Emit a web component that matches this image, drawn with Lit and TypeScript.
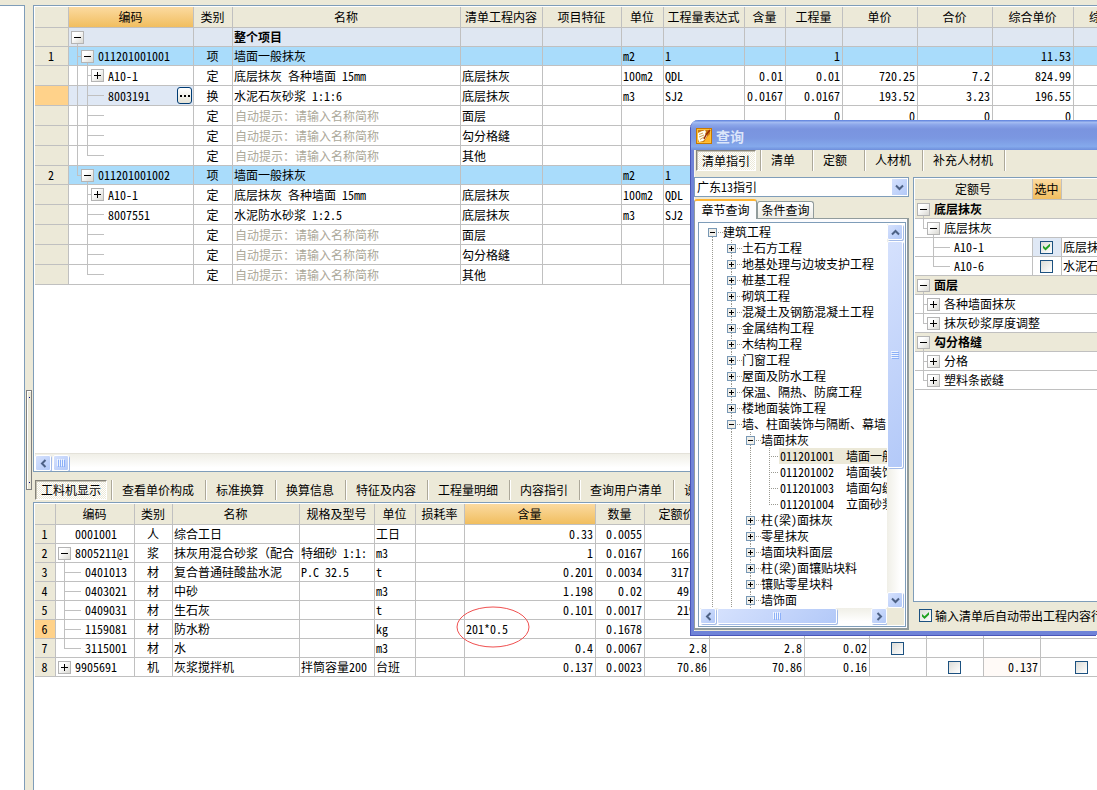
import { LitElement, html, css, svg, nothing } from "lit";
import { customElement } from "lit/decorators.js";
import { classMap } from "lit/directives/class-map.js";
import { styleMap } from "lit/directives/style-map.js";

const LINE = "#c0c0c0";

const base = css`
  :host {
    font-family: "Noto Sans Mono CJK SC", "Liberation Mono", "Noto Sans CJK SC", monospace;
    font-size: 12px;
    line-height: 16px;
    color: #000;
  }
  * {
    box-sizing: border-box;
  }
  button,
  input,
  select {
    font: inherit;
    color: inherit;
    margin: 0;
    padding: 0;
    border-radius: 0;
  }
  table {
    table-layout: fixed;
    width: 100%;
    border-collapse: separate;
    border-spacing: 0;
  }
  th,
  td {
    padding: 0 2px 0 1px;
    border-right: 1px solid #c0c0c0;
    border-bottom: 1px solid #c0c0c0;
    height: 19px;
    text-align: left;
    vertical-align: middle;
    white-space: nowrap;
    overflow: hidden;
    font-weight: normal;
  }
  tr.tall td,
  tr.tall th {
    height: 20px;
  }
  th {
    background: #ece9d8;
    text-align: center;
  }
  thead th {
    height: 21px;
  }
  thead th.hot {
    background: linear-gradient(#fbdaa0, #f1be5f);
  }
  th.mark {
    background: #ffd28a;
  }
  .center {
    text-align: center;
  }
  .right {
    text-align: right;
  }
  td.tree {
    position: relative;
    padding: 0;
  }
  .twig {
    position: relative;
    display: flex;
    align-items: center;
  }
  .guides {
    position: absolute;
    left: 0;
    top: 0;
    width: 100%;
    height: 100%;
  }
  .toggle {
    flex: none;
    width: 13px;
    height: 13px;
    margin-right: 4px;
    border: 1px solid #b4b4b4;
    background: linear-gradient(135deg, #fff 30%, #d9d8d2);
    display: block;
    line-height: 0;
  }
  .toggle svg {
    display: block;
  }
  input.tick {
    appearance: none;
    display: block;
    flex: none;
    width: 13px;
    height: 13px;
    border: 1px solid #1c5180;
    background: linear-gradient(135deg, #dcdcd7, #fff);
  }
  td input.tick {
    margin: 0 auto;
  }
  input.tick:checked::before {
    content: "";
    display: block;
    width: 7px;
    height: 7px;
    margin: 2px;
    background: #21a121;
    clip-path: polygon(0 29%, 36% 60%, 100% 0, 100% 38%, 36% 100%, 0 66%);
  }
  .tabs {
    display: flex;
  }
  .tabs button {
    appearance: none;
    border: 0;
    border-left: 1px solid #aca899;
    box-shadow: inset 1px 0 #fff;
    background: none;
    text-align: left;
    white-space: nowrap;
    flex: none;
  }
  .tabs button.down {
    border: 1px solid;
    border-color: #85837a #fff #fff #85837a;
    box-shadow: inset 1px 1px #c5c2b4;
    background: repeating-conic-gradient(#fff 0 25%, #ece9d8 0 50%) 0 0 / 2px 2px;
  }
  .sb {
    display: flex;
    background: linear-gradient(#f0efe7, #fff 80%);
  }
  .sb.v {
    flex-direction: column;
    background: linear-gradient(90deg, #f0efe7, #fff 80%);
  }
  .sb button,
  .sb .thumb {
    flex: none;
    width: 16px;
    height: 16px;
    border: 1px solid #fff;
    border-radius: 2px;
    box-shadow: 1px 1px #a4bbe8;
    background: linear-gradient(135deg, #d5e1fd, #b3c9f8);
    display: grid;
    place-items: center;
  }
`;

type TreeRow = { depth: number; state?: "open" | "shut"; last?: boolean; through?: number[]; leaf?: boolean };

/* Connector lines and expander for one cell of a tree column. */
const twig = (r: TreeRow, label: unknown) => {
  const px = 8 + 10 * (r.depth - 1);
  const hasParent = r.depth > 0;
  return html`
    <svg class="guides" aria-hidden="true" shape-rendering="crispEdges">
      ${(r.through ?? []).map((k) => svg`<rect x=${8 + 10 * k} y="0" width="1" height="20" fill=${LINE}></rect>`)}
      ${hasParent
        ? svg`<rect x=${px} y="0" width="1" height=${r.last ? 10 : 20} fill=${LINE}></rect>
              <rect x=${px} y="9" width=${r.state ? 5 : 17} height="1" fill=${LINE}></rect>`
        : nothing}
      ${r.state === "open" ? svg`<rect x=${8 + 10 * r.depth} y="10" width="1" height="12" fill=${LINE}></rect>` : nothing}
    </svg>
    <span class="twig" style=${styleMap({ "padding-left": `${(r.state ? 2 : 19) + 10 * r.depth}px` })}>
      ${r.state
        ? html`<button class="toggle" aria-label=${r.state === "open" ? "折叠" : "展开"}>
            <svg width="11" height="11" aria-hidden="true" shape-rendering="crispEdges">
              <rect x="2" y="5" width="7" height="1"></rect>
              ${r.state === "shut" ? svg`<rect x="5" y="2" width="1" height="7"></rect>` : nothing}
            </svg>
          </button>`
        : nothing}
      ${label}
    </span>
  `;
};

const chevron = (d: string) =>
  html`<svg width="9" height="9" viewBox="0 0 9 9" aria-hidden="true">
    <path d=${d} fill="none" stroke="#4d6185" stroke-width="2"></path>
  </svg>`;
const UP = "M1 6.5L4.5 3L8 6.5";
const DOWN = "M1 2.5L4.5 6L8 2.5";
const LEFT = "M6.5 1L3 4.5L6.5 8";
const RIGHT = "M2.5 1L6 4.5L2.5 8";

const grip = (vertical: boolean) =>
  html`<svg width="8" height="8" aria-hidden="true" shape-rendering="crispEdges">
    ${[0, 2, 4, 6].map((n) =>
      vertical
        ? svg`<rect x="0" y=${n} width="7" height="1" fill="#eef4fe"></rect><rect x="1" y=${n + 1} width="7" height="1" fill="#8cb0f8"></rect>`
        : svg`<rect x=${n} y="0" width="1" height="7" fill="#eef4fe"></rect><rect x=${n + 1} y="1" width="1" height="7" fill="#8cb0f8"></rect>`
    )}
  </svg>`;

const HINT = "自动提示：请输入名称简称";

type BillRow = TreeRow & {
  no?: string;
  code?: string;
  kind?: string;
  name?: string;
  content?: string;
  unit?: string;
  expr?: string;
  nums?: string[];
  tone?: "root" | "item";
  current?: boolean;
};

const blanks = (zeros: boolean): BillRow[] =>
  ["面层", "勾分格缝", "其他"].map((content, i) => ({
    depth: 2, kind: "定", name: HINT, content, last: i === 2, nums: zeros && i === 0 ? ["", "0", "0", "0", "0"] : [],
  }));

const group = (no: string, code: string, second: BillRow, lastItem: boolean): BillRow[] => [
  { depth: 1, state: "open", last: lastItem, no, code, kind: "项", name: "墙面一般抹灰", unit: "m2", expr: "1", nums: lastItem ? [] : ["", "1", "", "", "11.53"], tone: "item" },
  ...[
    { depth: 2, state: "shut", code: "A10-1", kind: "定", name: "底层抹灰 各种墙面 15mm", content: "底层抹灰", unit: "100m2", expr: "QDL", nums: lastItem ? [] : ["0.01", "0.01", "720.25", "7.2", "824.99"] } as BillRow,
    second,
    ...blanks(!lastItem),
  ].map((r) => ({ ...r, through: lastItem ? [] : [0] })),
];

const BILL: BillRow[] = [
  { depth: 0, state: "open", name: "整个项目", tone: "root" },
  ...group("1", "011201001001", {
    depth: 2, code: "8003191", kind: "换", name: "水泥石灰砂浆 1:1:6", content: "底层抹灰", unit: "m3", expr: "SJ2",
    nums: ["0.0167", "0.0167", "193.52", "3.23", "196.55"], current: true,
  }, false),
  ...group("2", "011201001002", {
    depth: 2, code: "8007551", kind: "定", name: "水泥防水砂浆 1:2.5", content: "底层抹灰", unit: "m3", expr: "SJ2", nums: [],
  }, true),
];

const BILL_COLS: [string, number][] = [
  ["", 34], ["编码", 125], ["类别", 39], ["名称", 228], ["清单工程内容", 82], ["项目特征", 79], ["单位", 42],
  ["工程量表达式", 81], ["含量", 41], ["工程量", 57], ["单价", 75], ["合价", 75], ["综合单价", 81], ["综合合价", 80],
];

type PartRow = TreeRow & { code: string; kind: string; name: string; spec?: string; unit: string; qty: string; total: string; rest: string[]; boxes?: number[]; extra?: string; current?: boolean };

const PARTS: PartRow[] = [
  { depth: 0, code: "0001001", kind: "人", name: "综合工日", unit: "工日", qty: "0.33", total: "0.0055", rest: ["", "", ""] },
  { depth: 0, state: "open", code: "8005211@1", kind: "浆", name: "抹灰用混合砂浆（配合", spec: "特细砂 1:1:", unit: "m3", qty: "1", total: "0.0167", rest: ["166.00", "", ""] },
  { depth: 1, code: "0401013", kind: "材", name: "复合普通硅酸盐水泥", spec: "P.C 32.5", unit: "t", qty: "0.201", total: "0.0034", rest: ["317.00", "", ""] },
  { depth: 1, code: "0403021", kind: "材", name: "中砂", unit: "m3", qty: "1.198", total: "0.02", rest: ["49.00", "", ""] },
  { depth: 1, code: "0409031", kind: "材", name: "生石灰", unit: "t", qty: "0.101", total: "0.0017", rest: ["219.5", "", ""] },
  { depth: 1, code: "1159081", kind: "材", name: "防水粉", unit: "kg", qty: "201*0.5", total: "0.1678", rest: ["", "", ""], current: true },
  { depth: 1, last: true, code: "3115001", kind: "材", name: "水", unit: "m3", qty: "0.4", total: "0.0067", rest: ["2.8", "2.8", "0.02"], boxes: [0] },
  { depth: 0, state: "shut", code: "9905691", kind: "机", name: "灰浆搅拌机", spec: "拌筒容量200", unit: "台班", qty: "0.137", total: "0.0023", rest: ["70.86", "70.86", "0.16"], boxes: [1, 3], extra: "0.137" },
];

const PART_COLS: [string, number][] = [
  ["", 21], ["编码", 79], ["类别", 38], ["名称", 127], ["规格及型号", 75], ["单位", 41], ["损耗率", 49], ["含量", 131],
  ["数量", 49], ["定额价", 65], ["", 95], ["", 65], ["", 57], ["", 57], ["", 57], ["", 82],
];

const head = (cols: [string, number][], hot: string) => html`
  <colgroup>
    ${cols.map(([, w]) => html`<col style=${styleMap({ width: `${w}px` })} />`)}
  </colgroup>
  <thead>
    <tr>
      ${cols.map(([t]) => html`<th scope="col" class=${classMap({ hot: t === hot })}>${t}</th>`)}
    </tr>
  </thead>
`;

@customElement("query-dialog")
export class QueryDialog extends LitElement {
  static styles = [
    base,
    css`
      :host {
        display: flex;
        flex-direction: column;
        border: solid #6f83d8;
        border-width: 0 0 4px 3px;
        border-radius: 7px 0 0 0;
        background: #ece9d8;
        box-shadow: inset 1px 0 #f6f4ec, -1px 1px #4a55b8;
      }
      .title {
        height: 30px;
        margin-left: -3px;
        padding: 1px 0 0 5px;
        border-radius: 7px 0 0 0;
        display: flex;
        align-items: center;
        gap: 4px;
        background: linear-gradient(#5a7fdc 0, #a3bbf1 8%, #8ba6ea 16%, #7a94df 30%, #7b97e1 60%, #84a9ec 88%, #6f8fdc 100%);
        color: #dbe5fa;
        font-size: 14px;
        font-weight: bold;
      }
      .tabs {
        height: 21px;
        padding-left: 2px;
        overflow: hidden;
      }
      .tabs button {
        padding: 0 11px 2px 10px;
        min-width: 52px;
      }
      .tabs button.down {
        padding: 0 5px;
        min-width: 60px;
        margin-right: 4px;
      }
      .body {
        flex: 1;
        min-height: 0;
        display: flex;
        gap: 4px;
        padding: 6px 0 1px;
        overflow: hidden;
      }
      .left {
        width: 215px;
        flex: none;
        display: flex;
        flex-direction: column;
      }
      .combo {
        position: relative;
        height: 20px;
      }
      .combo select {
        appearance: none;
        width: 100%;
        height: 20px;
        border: 1px solid #7f9db9;
        background: #fff;
        padding-left: 2px;
        line-height: 16px;
      }
      .combo .drop {
        position: absolute;
        right: 2px;
        top: 2px;
        width: 15px;
        height: 16px;
        background: linear-gradient(135deg, #d5e1fd, #b3c9f8);
        display: grid;
        place-items: center;
        pointer-events: none;
      }
      .pages {
        display: flex;
        align-items: flex-end;
        padding-top: 2px;
      }
      .pages button {
        border: 1px solid #919b9c;
        border-bottom: 0;
        border-radius: 3px 3px 0 0;
        background: linear-gradient(#fff, #ecebe5);
        height: 17px;
        width: 57px;
        line-height: 16px;
        white-space: nowrap;
      }
      .pages button.on {
        position: relative;
        width: 63px;
        height: 20px;
        margin-bottom: -1px;
        border-top: 2px solid #ffb533;
        background: #fcfcfe;
      }
      .pane {
        flex: 1;
        min-height: 0;
        border: 1px solid #919b9c;
        border-width: 1px 2px 2px 1px;
        background: #fcfcfe;
        padding: 3px 1px 1px 3px;
        display: flex;
      }
      .box {
        flex: 1;
        min-width: 0;
        border: 1px solid #7f9db9;
        background: #fff;
        padding: 1px;
        display: grid;
        grid-template: minmax(0, 1fr) 17px / minmax(0, 1fr) 17px;
      }
      ul {
        list-style: none;
        margin: 0;
        padding: 0 0 0 8px;
        overflow: hidden;
      }
      li {
        display: flex;
        height: 16px;
        align-items: center;
        white-space: nowrap;
      }
      li svg {
        flex: none;
      }
      .exp {
        flex: none;
        border: 0;
        background: none;
        display: block;
        height: 16px;
      }
      .exp svg {
        display: block;
      }
      li .sel {
        background: #ece9d8;
        flex: 1;
      }
      .item {
        padding-left: 1px;
      }
      .sb.v .thumb {
        flex: 0 1 227px;
        height: auto;
        margin-top: 1px;
      }
      .sb.v button:last-child {
        margin-top: auto;
      }
      .sb.h .thumb {
        width: 120px;
        margin-left: 1px;
      }
      .sb.h button:last-child {
        margin-left: auto;
      }
      .corner {
        background: #ece9d8;
      }
      .main {
        flex: 1;
        min-width: 0;
        display: flex;
        flex-direction: column;
      }
      .list {
        flex: 1;
        min-height: 0;
        overflow: hidden;
        border: 1px solid #7f9db9;
        border-right: 0;
        padding: 1px 0 0 1px;
        background: #fff;
      }
      .group td {
        background: #ece9d8;
        font-weight: bold;
      }
      .picked {
        background: #dfe8f5;
      }
      .opt {
        height: 28px;
        padding: 0 0 1px 6px;
        display: flex;
        align-items: center;
        gap: 3px;
        white-space: nowrap;
      }
    `,
  ];

  private nodes: [number, string, string][] = [
    [0, "-", "建筑工程"],
    ...["土石方工程", "地基处理与边坡支护工程", "桩基工程", "砌筑工程", "混凝土及钢筋混凝土工程", "金属结构工程", "木结构工程", "门窗工程", "屋面及防水工程", "保温、隔热、防腐工程", "楼地面装饰工程"].map(
      (t) => [1, "+", t] as [number, string, string]
    ),
    [1, "-", "墙、柱面装饰与隔断、幕墙"],
    [2, "-", "墙面抹灰"],
    [3, "s", "011201001\u00a0\u00a0墙面一般"],
    [3, "", "011201002\u00a0\u00a0墙面装饰"],
    [3, "", "011201003\u00a0\u00a0墙面勾缝"],
    [3, "", "011201004\u00a0\u00a0立面砂浆"],
    ...["柱(梁)面抹灰", "零星抹灰", "墙面块料面层", "柱(梁)面镶贴块料", "镶贴零星块料", "墙饰面"].map((t) => [2, "+", t] as [number, string, string]),
  ];

  private node([depth, mark, text]: [number, string, string], i: number) {
    const dots = (x: number, y1: number, y2: number) =>
      svg`<path d=${`M${x + 0.5} ${y1}V${y2}`} stroke="#9a9a92" stroke-dasharray="1 1"></path>`;
    const above = Array.from({ length: depth }, (_, k) => k);
    const lastLeaf = depth === 3 && this.nodes[i + 1][0] !== 3;
    const toggle = mark === "-" || mark === "+";
    const x = depth * 19;
    return html`<li>
      <svg width=${toggle ? x : x + 14} height="16" aria-hidden="true" shape-rendering="crispEdges">
        ${(toggle ? above : [0, 1, 2]).map((k) => dots(k * 19 + 4, 0, 16))}
        ${toggle
          ? nothing
          : svg`${dots(61, 0, lastLeaf ? 8 : 16)}<path d="M61 8.5H70" stroke="#9a9a92" stroke-dasharray="1 1"></path>`}
      </svg>
      ${toggle
        ? html`<button class="exp" aria-label=${mark === "-" ? "折叠" : "展开"}>
            <svg width="15" height="16" shape-rendering="crispEdges" aria-hidden="true">
              ${depth ? dots(4, 0, 4) : nothing} ${depth || mark === "-" ? dots(4, 13, 16) : nothing}
              <path d="M10 8.5H15" stroke="#9a9a92" stroke-dasharray="1 1"></path>
              <rect x="0.5" y="4.5" width="8" height="8" fill="#f0eee8" stroke="#7898b5"></rect>
              <rect x="2" y="8" width="5" height="1"></rect>
              ${mark === "+" ? svg`<rect x="4" y="6" width="1" height="5"></rect>` : nothing}
            </svg>
          </button>`
        : nothing}
      <span class=${classMap({ item: !toggle, sel: mark === "s" })}>${text}</span>
    </li>`;
  }

  private leaf(code: string, on: boolean, name: string, last: boolean) {
    return html`<tr>
      <td class="tree">${twig({ depth: 2, last }, code)}</td>
      <td class=${classMap({ center: true, picked: on })}><input class="tick" type="checkbox" aria-label=${code} ?checked=${on} /></td>
      <td>${name}</td>
    </tr>`;
  }

  private span(depth: number, state: "open" | "shut", text: string, last = false) {
    return html`<tr class=${depth ? "" : "group"}>
      <td class="tree" colspan="3">${twig({ depth, state, last }, text)}</td>
    </tr>`;
  }

  render() {
    return html`
      <div class="title">
        <svg width="16" height="16" viewBox="0 0 16 16" aria-hidden="true">
          <rect width="16" height="16" fill="#c87800"></rect>
          <rect x="1" y="1" width="14" height="14" fill="#ffc23c"></rect>
          <rect x="2" y="2" width="12" height="12" fill="#c87a10"></rect>
          <path d="M2 5L4 4L6 3L7 3L9 2L10 4L9 6L11 7L10 10L7 13L3 14L2 11Z" fill="#fffdf2"></path>
          <path d="M3 6.500L7 5M3 9L8 7M4 11.500L8 9" stroke="#c08a30" stroke-width=".8" fill="none"></path>
          <path d="M14 2L10 7L8 11" stroke="#9a2c00" stroke-width="1.500" fill="none"></path>
          <path d="M11 9L14 6V14H8Z" fill="#ffb428"></path>
        </svg>
        查询
      </div>
      <div class="tabs">
        <button class="down">清单指引</button>
        ${["清单", "定额", "人材机", "补充人材机", ""].map((t) => html`<button>${t}</button>`)}
      </div>
      <div class="body">
        <div class="left">
          <div class="combo">
            <select aria-label="指引"><option>广东13指引</option></select>
            <span class="drop">${chevron(DOWN)}</span>
          </div>
          <div class="pages"><button class="on">章节查询</button><button>条件查询</button></div>
          <div class="pane">
            <div class="box">
              <ul>${this.nodes.map((n, i) => this.node(n, i))}</ul>
              <div class="sb v">
                <button aria-label="向上">${chevron(UP)}</button>
                <div class="thumb">${grip(true)}</div>
                <button aria-label="向下">${chevron(DOWN)}</button>
              </div>
              <div class="sb h">
                <button aria-label="向左">${chevron(LEFT)}</button>
                <div class="thumb">${grip(false)}</div>
                <button aria-label="向右">${chevron(RIGHT)}</button>
              </div>
              <div class="corner"></div>
            </div>
          </div>
        </div>
        <div class="main">
          <div class="list">
            <table>
              ${head([["定额号", 118], ["选中", 29], ["", 160]], "选中")}
              <tbody>
                ${this.span(0, "open", "底层抹灰")} ${this.span(1, "open", "底层抹灰", true)}
                ${this.leaf("A10-1", true, "底层抹灰", false)} ${this.leaf("A10-6", false, "水泥石灰", true)}
                ${this.span(0, "open", "面层")} ${this.span(1, "shut", "各种墙面抹灰")} ${this.span(1, "shut", "抹灰砂浆厚度调整", true)}
                ${this.span(0, "open", "勾分格缝")} ${this.span(1, "shut", "分格")} ${this.span(1, "shut", "塑料条嵌缝", true)}
              </tbody>
            </table>
          </div>
          <label class="opt"><input class="tick" type="checkbox" checked />输入清单后自动带出工程内容行</label>
        </div>
      </div>
    `;
  }
}

@customElement("app-root")
export class AppRoot extends LitElement {
  static styles = [
    base,
    css`
      :host {
        display: grid;
        grid-template-columns: 25px 8px minmax(0, 1fr);
        height: 100vh;
        box-sizing: border-box;
        padding-top: 5px;
        background: #ece9d8;
        position: relative;
        overflow: hidden;
      }
      .side {
        background: #fff;
        border: solid #7f9db9;
        border-width: 1px 1px 0 0;
      }
      .split {
        display: flex;
        align-items: center;
        justify-content: center;
      }
      .handle {
        width: 6px;
        height: 100px;
        margin-top: 84px;
        border: 1px solid #808080;
        box-shadow: inset 1px 1px #fff;
        display: flex;
        flex-direction: column;
        justify-content: space-between;
        align-items: center;
        padding: 6px 0;
      }
      .handle i {
        width: 1px;
        height: 1px;
        background: #000080;
      }
      main {
        display: flex;
        flex-direction: column;
        min-width: 0;
      }
      .frame {
        border: 1px solid #7f9db9;
        border-right: 0;
        padding: 1px 0 0 1px;
        background: #fff;
        overflow: hidden;
        display: flex;
        flex-direction: column;
      }
      .upper {
        flex: 0 1 467px;
        justify-content: space-between;
      }
      .lower {
        flex: 1 1 0;
        border-bottom: 0;
      }
      .root td {
        background: #dfe7f2;
        font-weight: bold;
      }
      .item td {
        background: #a9dcfb;
      }
      .hint {
        color: #aca899;
        padding-left: 2px;
      }
      td.current {
        background: #dfe8f5;
      }
      .more {
        position: absolute;
        right: 1px;
        top: 1px;
        width: 15px;
        height: 17px;
        border: 1px solid #003c74;
        border-radius: 3px;
        background: linear-gradient(#fff, #e4e2d6);
        line-height: 0;
        display: grid;
        place-items: center;
      }
      .sb.h {
        height: 18px;
        padding: 1px 0;
        border-top: 1px solid #e4e2da;
      }
      .sb.h .thumb {
        margin-left: 2px;
      }
      .tabs {
        padding: 8px 0 2px 2px;
        overflow: hidden;
        height: 30px;
        flex: none;
      }
      .tabs button {
        padding: 0 11px 0 10px;
      }
      .tabs button.down {
        padding: 0 5px;
        width: 72px;
        margin-right: 4px;
      }
      .edit {
        position: relative;
        overflow: visible;
      }
      .edit input {
        display: block;
        width: 100%;
        height: 16px;
        border: 0;
        outline: 0;
        background: transparent;
      }
      .ring {
        position: absolute;
        left: -9px;
        top: -14px;
        pointer-events: none;
      }
      .warm {
        background: #fffaf7;
      }
      query-dialog {
        position: absolute;
        left: 691px;
        right: 0;
        top: 120px;
        height: 515px;
        box-sizing: border-box;
      }
    `,
  ];

  private billRow(r: BillRow) {
    return html`<tr class=${classMap({ root: r.tone === "root", item: r.tone === "item", tall: !r.tone })}>
      <th scope="row" class=${classMap({ mark: !!r.current })}>${r.no}</th>
      <td class=${classMap({ tree: true, current: !!r.current })}>
        ${twig(r, r.code)}
        ${r.current
          ? html`<button class="more" aria-label="更多">
              <svg width="10" height="2" aria-hidden="true" shape-rendering="crispEdges">
                <rect width="2" height="2"></rect><rect x="4" width="2" height="2"></rect><rect x="8" width="2" height="2"></rect>
              </svg>
            </button>`
          : nothing}
      </td>
      <td class="center">${r.kind}</td>
      <td class=${classMap({ hint: r.name === HINT })}>${r.name}</td>
      <td>${r.content}</td>
      <td></td>
      <td>${r.unit}</td>
      <td>${r.expr}</td>
      ${[0, 1, 2, 3, 4].map((i) => html`<td class="right">${r.nums?.[i]}</td>`)}
      <td></td>
    </tr>`;
  }

  private partRow(r: PartRow, i: number) {
    return html`<tr>
      <th scope="row" class=${classMap({ mark: !!r.current })}>${i + 1}</th>
      <td class="tree">${twig(r, r.code)}</td>
      <td class="center">${r.kind}</td>
      <td>${r.name}</td>
      <td>${r.spec}</td>
      <td>${r.unit}</td>
      <td></td>
      ${r.current
        ? html`<td class="edit">
            <input aria-label="含量" .value=${r.qty} />
            <svg class="ring" width="74" height="42" aria-hidden="true">
              <ellipse cx="37" cy="21" rx="36" ry="20" fill="none" stroke="#f05050"></ellipse>
            </svg>
          </td>`
        : html`<td class="right">${r.qty}</td>`}
      <td class="right">${r.total}</td>
      ${r.rest.map((v) => html`<td class="right">${v}</td>`)}
      ${[0, 1, 2, 3].map((c) =>
        r.boxes?.includes(c)
          ? html`<td class="center"><input class="tick" type="checkbox" aria-label=${r.name} /></td>`
          : html`<td class=${classMap({ right: true, warm: c === 2 && !!r.extra })}>${c === 2 ? r.extra : nothing}</td>`
      )}
    </tr>`;
  }

  render() {
    return html`
      <div class="side"></div>
      <div class="split"><div class="handle"><i></i><i></i></div></div>
      <main>
        <section class="frame upper">
          <table>
            ${head(BILL_COLS, "编码")}
            <tbody>${BILL.map((r) => this.billRow(r))}</tbody>
          </table>
          <div class="sb h">
            <button aria-label="向左">${chevron(LEFT)}</button>
            <div class="thumb">${grip(false)}</div>
          </div>
        </section>
        <nav class="tabs">
          <button class="down">工料机显示</button>
          ${["查看单价构成", "标准换算", "换算信息", "特征及内容", "工程量明细", "内容指引", "查询用户清单", "说明信息"].map((t) => html`<button>${t}</button>`)}
        </nav>
        <section class="frame lower">
          <table>
            ${head(PART_COLS, "含量")}
            <tbody>${PARTS.map((r, i) => this.partRow(r, i))}</tbody>
          </table>
        </section>
      </main>
      <query-dialog role="dialog" aria-label="查询"></query-dialog>
    `;
  }
}
